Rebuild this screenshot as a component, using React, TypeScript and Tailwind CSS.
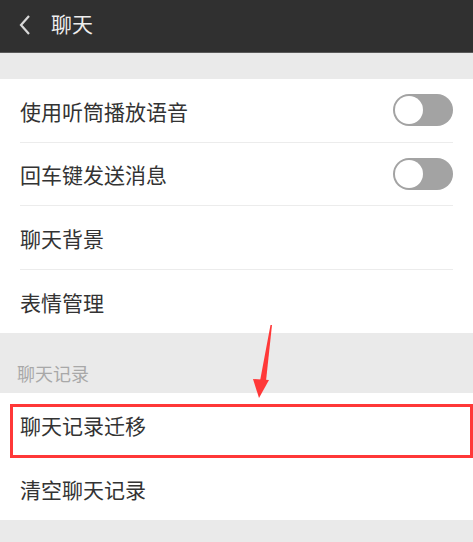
import React from 'react';

const FONT = { fontFamily: '"Noto Sans CJK SC", "Noto Sans", sans-serif' };

function Toggle() {
  return (
    <div className="w-[60px] h-[32px] rounded-full bg-[#a3a3a3] p-[2px] flex items-center">
      <div className="w-[28px] h-[28px] rounded-full bg-white" />
    </div>
  );
}

function Row({ label, toggle, divider }: { label: string; toggle?: boolean; divider?: boolean }) {
  return (
    <div className="px-5">
      <div
        className={`h-[63.5px] flex items-center justify-between ${
          divider ? 'border-b border-[#ececec]' : ''
        }`}
      >
        <span className="text-[21px] text-[#333333] pt-[2px]">{label}</span>
        {toggle && <Toggle />}
      </div>
    </div>
  );
}

export default function App() {
  return (
    <div className="w-[473px] h-[542px] bg-[#eaeaea] relative overflow-hidden" style={FONT}>
      {/* Header */}
      <div className="h-[53px] bg-[#303030] flex items-center border-b border-[#5a5a5a]">
        <svg width="14" height="22" viewBox="0 0 14 22" className="ml-[18px] mb-[2px]">
          <path d="M11 2 L3 11 L11 20" fill="none" stroke="#d8d8d8" strokeWidth="2.2" />
        </svg>
        <span className="ml-[19px] text-[21px] text-[#eeeeee] pb-[4px]">聊天</span>
      </div>

      <div className="h-[26px]" />

      <div className="bg-white">
        <Row label="使用听筒播放语音" toggle divider />
        <Row label="回车键发送消息" toggle divider />
        <Row label="聊天背景" divider />
        <Row label="表情管理" />
      </div>

      <div className="h-[60px] px-[17px] pt-[27px]">
        <span className="text-[18px] text-[#a8a8a8]">聊天记录</span>
      </div>

      <div className="bg-white">
        <div className="relative">
          <Row label="聊天记录迁移" />
          <div className="absolute left-[10px] right-0 top-[11px] h-[54px] border-[3px] border-[#ff3838]" />
        </div>
        <Row label="清空聊天记录" />
      </div>

      {/* annotation arrow */}
      <svg className="absolute left-[248px] top-[322px]" width="30" height="80" viewBox="0 0 30 80">
        <path d="M22.5 3 L24 3 L18 59 L12 59 Z" fill="#ff3838" />
        <path d="M5 57 L21 58 L11 76 Z" fill="#ff3838" />
      </svg>
    </div>
  );
}
